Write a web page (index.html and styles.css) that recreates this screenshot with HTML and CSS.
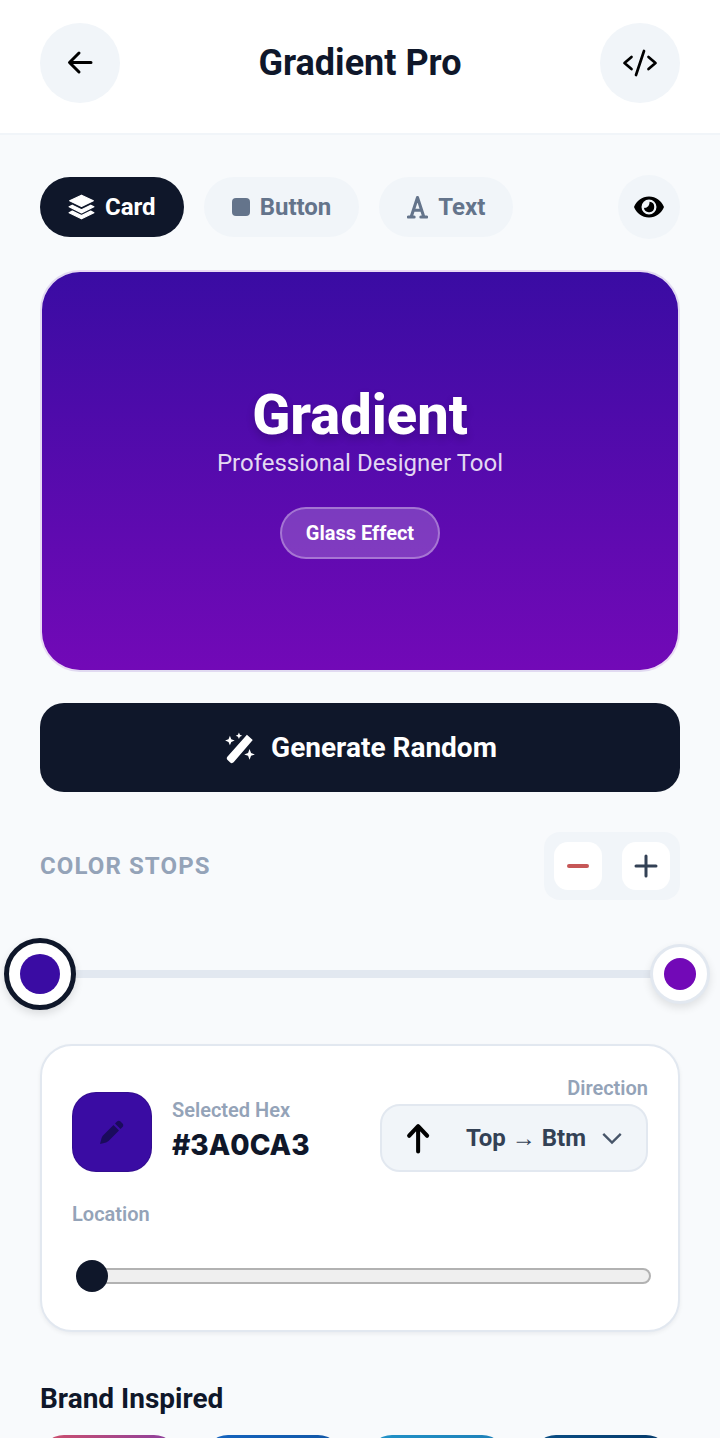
FILE: index.html
```html
<!DOCTYPE html>
<html lang="en">
<head>
    <meta charset="UTF-8">
    <title>Gradient Pro</title>
    <link rel="stylesheet" href="styles.css">
</head>
<body>
<div class="page">
    <header class="topbar">
        <div class="round-btn">
            <svg width="32" height="32" viewBox="0 0 32 32" fill="none" stroke="#000" stroke-width="3" stroke-linecap="round" stroke-linejoin="round"><path d="M27 15.500H6M15 6l-9.500 9.500L15 25"/></svg>
        </div>
        <h1 class="title">Gradient Pro</h1>
        <div class="round-btn">
            <svg width="36" height="36" viewBox="0 0 36 36" fill="none" stroke="#000" stroke-width="2.700" stroke-linecap="round" stroke-linejoin="round"><path d="M9.500 12L2.500 18l7 6M26.500 12l7 6-7 6M22 6l-8 24"/></svg>
        </div>
    </header>

    <main class="content">
        <div class="tabs">
            <div class="tab active">
                <svg width="27" height="28" viewBox="0 0 24 24" fill="#fff" stroke="#fff" stroke-width="1.100" stroke-linejoin="round"><path d="M12 1.500l10.500 5L12 11.500 1.500 6.500z"/><path d="M3.800 10.400l8.200 4 8.200-4 2.800 1.400L12 17.200 1 11.800z"/><path d="M3.800 15.700l8.200 4 8.200-4 2.800 1.400L12 22.500 1 17.100z"/></svg>
                <span>Card</span>
            </div>
            <div class="tab">
                <span class="square"></span>
                <span>Button</span>
            </div>
            <div class="tab">
                <svg width="21" height="26" viewBox="0 0 22 26" fill="none" stroke="#64748b" stroke-width="3.200" stroke-linecap="round"><path d="M11 3L4.500 23M11 3l6.500 20M6.500 16.500h9M1.500 23.500h6M14.500 23.500h6"/></svg>
                <span>Text</span>
            </div>
            <div class="eye-btn">
                <svg width="32" height="32" viewBox="0 0 32 32"><path fill="#000" fill-rule="evenodd" d="M16 5.500c7 0 12.500 4.500 15 10.500-2.500 6-8 10.500-15 10.500S3.500 22 1 16C3.500 10 9 5.500 16 5.500zM16 8.500a7.500 7.500 0 1 0 0 15 7.500 7.500 0 0 0 0-15z"/><path fill="#000" d="M16.500 10.800a5.200 5.200 0 1 1-5.600 6c2.900.7 5.900-2 5.600-6z"/></svg>
            </div>
        </div>

        <section class="preview">
            <h2 class="preview-title">Gradient</h2>
            <p class="preview-sub">Professional Designer Tool</p>
            <span class="glass">Glass Effect</span>
        </section>

        <div class="generate">
            <svg width="34" height="34" viewBox="0 0 32 32" fill="#fff"><path d="M22.500 3.500l5.500 5L10 29.500c-.9 1-2.300 1-3.200.2l-2.500-2.300c-.9-.8-1-2.200-.2-3.100z"/><path d="M6.500 4.500l1.300 3.200 3.200 1.300-3.200 1.300-1.300 3.200-1.300-3.200L2 9l3.200-1.300zM15 1.500l.9 2.100 2.100.9-2.100.9L15 7.500l-.9-2.100-2.100-.9 2.100-.9zM25 17l1.400 3.600L30 22l-3.600 1.400L25 27l-1.400-3.600L20 22l3.600-1.400z"/></svg>
            <span>Generate Random</span>
        </div>

        <div class="stops-head">
            <span class="stops-label">COLOR STOPS</span>
            <div class="stops-ctrl">
                <div class="mini-btn"><span class="minus"></span></div>
                <div class="mini-btn">
                    <svg width="28" height="28" viewBox="0 0 28 28" stroke="#334155" stroke-width="3" stroke-linecap="round"><path d="M14 4v20M4 14h20"/></svg>
                </div>
            </div>
        </div>

        <div class="stops-track">
            <span class="stop first"><i></i></span>
            <span class="stop last"><i></i></span>
        </div>

        <section class="panel">
            <div class="panel-top">
                <div class="swatch">
                    <svg width="28" height="28" viewBox="0 0 28 28" fill="#1a0b5c"><path d="M19 3.500c1-1 2.500-1 3.500 0l2 2c1 1 1 2.500 0 3.500l-2 2-5.500-5.500zM15.500 7l5.500 5.500-10.500 10.500c-.7.7-1.500 1.100-2.400 1.400L2 26l1.600-6c.3-.9.700-1.700 1.400-2.400z"/></svg>
                </div>
                <div class="hex">
                    <span class="small-label">Selected Hex</span>
                    <strong class="hex-value">#3A0CA3</strong>
                </div>
                <div class="direction">
                    <span class="small-label dir-label">Direction</span>
                    <div class="select">
                        <svg width="36" height="36" viewBox="0 0 32 32" fill="none" stroke="#000" stroke-width="3.600" stroke-linecap="round" stroke-linejoin="round"><path d="M17 28V6M9 14l8-8.500 8 8.500"/></svg>
                        <span class="select-text">Top <em>→</em> Btm</span>
                        <svg width="28" height="28" viewBox="0 0 24 24" fill="none" stroke="#475569" stroke-width="2"><path d="M4.500 8.500l7.500 7.500 7.500-7.500"/></svg>
                    </div>
                </div>
            </div>
            <span class="small-label loc">Location</span>
            <div class="range"><span class="thumb"></span></div>
        </section>

        <h3 class="brand-title">Brand Inspired</h3>
        <div class="brands">
            <div class="brand b1"></div>
            <div class="brand b2"></div>
            <div class="brand b3"></div>
            <div class="brand b4"></div>
        </div>
    </main>
</div>
</body>
</html>
```
FILE: styles.css
```css
* {
    box-sizing: border-box;
}
body {
    margin: 0;
    background: #f8fafc;
    font-family: Roboto, "Noto Sans", sans-serif;
    color: #0f172a;
}
.page {
    height: 1438px;
    overflow: hidden;
}
.topbar {
    display: flex;
    align-items: center;
    justify-content: space-between;
    height: 135px;
    padding: 0 40px 7px;
    background: #fff;
    border-bottom: 2px solid #f1f5f9;
}
.round-btn {
    width: 80px;
    height: 80px;
    border-radius: 50%;
    background: #f1f5f9;
    display: flex;
    align-items: center;
    justify-content: center;
}
.title {
    margin: 0;
    font-size: 36px;
    font-weight: 700;
}
.content {
    padding: 40px 40px 0;
}
.tabs {
    display: flex;
    align-items: center;
    gap: 20px;
    height: 64px;
}
.tab {
    display: flex;
    align-items: center;
    gap: 10px;
    height: 60px;
    padding: 0 28px;
    border-radius: 30px;
    background: #f1f5f9;
    color: #64748b;
    font-size: 24px;
    font-weight: 700;
}
.tab.active {
    background: #0f172a;
    color: #fff;
}
.square {
    width: 18px;
    height: 18px;
    border-radius: 4px;
    background: #64748b;
}
.eye-btn {
    width: 62px;
    height: 64px;
    margin-left: auto;
    border-radius: 50%;
    background: #f1f5f9;
    display: flex;
    align-items: center;
    justify-content: center;
}
.preview {
    display: flex;
    flex-direction: column;
    align-items: center;
    height: 402px;
    margin-top: 31px;
    padding-top: 112px;
    border: 2px solid rgba(255, 255, 255, 0.85);
    border-radius: 40px;
    background: linear-gradient(180deg, #3a0ca3, #7209b7);
    color: #fff;
}
.preview-title {
    margin: 0;
    font-size: 56px;
    line-height: 63px;
    font-weight: 800;
    text-shadow: 0 4px 8px rgba(0, 0, 0, 0.2);
}
.preview-sub {
    margin: 0;
    font-size: 24px;
    line-height: 32px;
    color: rgba(255, 255, 255, 0.85);
}
.glass {
    margin-top: 28px;
    padding: 0 24px;
    height: 52px;
    line-height: 48px;
    border: 2px solid rgba(255, 255, 255, 0.3);
    border-radius: 26px;
    background: rgba(255, 255, 255, 0.2);
    font-size: 20px;
    font-weight: 700;
}
.generate {
    display: flex;
    align-items: center;
    justify-content: center;
    gap: 14px;
    height: 89px;
    margin-top: 31px;
    border-radius: 24px;
    background: #0f172a;
    color: #fff;
    font-size: 28px;
    font-weight: 700;
}
.stops-head {
    display: flex;
    align-items: center;
    justify-content: space-between;
    margin-top: 40px;
}
.stops-label {
    font-size: 24px;
    font-weight: 700;
    letter-spacing: 1.100px;
    color: #94a3b8;
}
.stops-ctrl {
    display: flex;
    gap: 20px;
    padding: 10px;
    border-radius: 16px;
    background: #f1f5f9;
}
.mini-btn {
    width: 48px;
    height: 48px;
    border-radius: 14px;
    background: #fff;
    display: flex;
    align-items: center;
    justify-content: center;
}
.minus {
    width: 22px;
    height: 4px;
    border-radius: 2px;
    background: #c65757;
}
.stops-track {
    position: relative;
    height: 8px;
    margin-top: 70px;
    background: #e2e8f0;
}
.stop {
    position: absolute;
    top: 50%;
    left: 0;
    transform: translate(-50%, -50%);
    display: flex;
    align-items: center;
    justify-content: center;
    border-radius: 50%;
    background: #fff;
}
.stop.first {
    width: 72px;
    height: 72px;
    border: 5px solid #0f172a;
    box-shadow: 0 4px 8px rgba(0, 0, 0, 0.12);
}
.stop.first i {
    width: 40px;
    height: 40px;
    border-radius: 50%;
    background: #3a0ca3;
}
.stop.last {
    left: 100%;
    width: 60px;
    height: 60px;
    border: 3px solid #e2e8f0;
    box-shadow: 0 4px 8px rgba(0, 0, 0, 0.1);
}
.stop.last i {
    width: 32px;
    height: 32px;
    border-radius: 50%;
    background: #7209b7;
}
.panel {
    height: 288px;
    margin-top: 66px;
    padding: 30px 30px 0;
    border: 2px solid #e2e8f0;
    border-radius: 32px;
    background: #fff;
    box-shadow: 0 2px 4px rgba(15, 23, 42, 0.06);
}
.panel-top {
    display: flex;
    align-items: flex-end;
}
.swatch {
    width: 80px;
    height: 80px;
    border: 1px solid rgba(15, 23, 42, 0.15);
    border-radius: 24px;
    background: #3a0ca3;
    display: flex;
    align-items: center;
    justify-content: center;
}
.hex {
    display: flex;
    flex-direction: column;
    margin: 0 0 7px 20px;
}
.small-label {
    font-size: 20px;
    line-height: 24px;
    font-weight: 600;
    color: #94a3b8;
}
.dir-label {
    margin-bottom: 4px;
}
.hex-value {
    margin-top: 3px;
    font-family: Inter, sans-serif;
    font-size: 28px;
    line-height: 40px;
    font-weight: 800;
}
.direction {
    display: flex;
    flex-direction: column;
    align-items: flex-end;
    margin-left: auto;
}
.select {
    display: flex;
    align-items: center;
    width: 268px;
    height: 68px;
    padding: 0 20px 0 17px;
    border: 2px solid #e2e8f0;
    border-radius: 20px;
    background: #f1f5f9;
}
.select-text {
    flex: 1;
    text-align: center;
    padding-left: 19px;
    font-size: 24px;
    font-weight: 700;
    color: #334155;
}
.select-text em {
    font-style: normal;
    font-family: "Liberation Sans", sans-serif;
}
.loc {
    display: block;
    margin-top: 30px;
}
.range {
    position: relative;
    height: 16px;
    margin: 42px -3px 0 5px;
    border: 2px solid #b2b2b2;
    border-radius: 8px;
    background: #efefef;
}
.thumb {
    position: absolute;
    top: 50%;
    left: -3px;
    width: 32px;
    height: 32px;
    transform: translateY(-50%);
    border-radius: 50%;
    background: #0f172a;
}
.brand-title {
    margin: 50px 0 0;
    font-size: 28px;
    line-height: 34px;
    font-weight: 700;
}
.brands {
    display: flex;
    gap: 26px;
    margin-top: 19px;
}
.brand {
    flex: 0 0 138px;
    height: 130px;
    border-radius: 24px;
}
.b1 {
    background: linear-gradient(90deg, #d0506a, #8a3fa0);
}
.b2 {
    background: linear-gradient(90deg, #1565c0, #1257a6);
}
.b3 {
    background: linear-gradient(90deg, #2193c8, #1e80b8);
}
.b4 {
    background: linear-gradient(90deg, #0b4f86, #053a6a);
}
```
